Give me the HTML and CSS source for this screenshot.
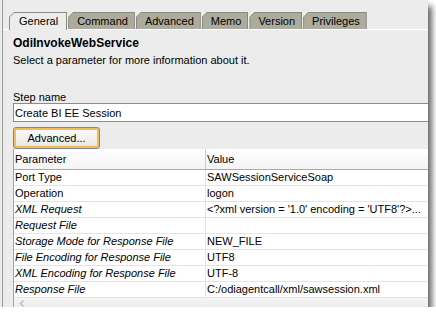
FILE: index.html
```html
<!DOCTYPE html>
<html lang="en">
<head>
    <meta charset="UTF-8">
    <title>OdiInvokeWebService</title>
    <link rel="stylesheet" href="styles.css">
</head>
<body>

    <div class="window">
        <div class="pane">
            <div class="tabs">
                <div class="tab active"><span>General</span></div>
                <div class="tab"><span>Command</span></div>
                <div class="tab"><span>Advanced</span></div>
                <div class="tab"><span>Memo</span></div>
                <div class="tab"><span>Version</span></div>
                <div class="tab"><span>Privileges</span></div>
            </div>

            <div class="content">
                <h1 class="title">OdiInvokeWebService</h1>
                <p class="hint">Select a parameter for more information about it.</p>

                <label class="field-label" for="stepName">Step name</label>
                <input type="text" id="stepName" class="step-name" value="Create BI EE Session">

                <button class="adv-btn">Advanced...</button>

                <div class="grid">
                    <div class="grid-row grid-head">
                        <div class="cell">Parameter</div>
                        <div class="cell">Value</div>
                    </div>
                    <div class="grid-row">
                        <div class="cell">Port Type</div>
                        <div class="cell">SAWSessionServiceSoap</div>
                    </div>
                    <div class="grid-row">
                        <div class="cell">Operation</div>
                        <div class="cell">logon</div>
                    </div>
                    <div class="grid-row optional">
                        <div class="cell">XML Request</div>
                        <div class="cell">&lt;?xml version = '1.0' encoding = 'UTF8'?&gt;...</div>
                    </div>
                    <div class="grid-row optional">
                        <div class="cell">Request File</div>
                        <div class="cell"></div>
                    </div>
                    <div class="grid-row optional">
                        <div class="cell">Storage Mode for Response File</div>
                        <div class="cell">NEW_FILE</div>
                    </div>
                    <div class="grid-row optional">
                        <div class="cell">File Encoding for Response File</div>
                        <div class="cell">UTF8</div>
                    </div>
                    <div class="grid-row optional">
                        <div class="cell">XML Encoding for Response File</div>
                        <div class="cell">UTF-8</div>
                    </div>
                    <div class="grid-row optional">
                        <div class="cell">Response File</div>
                        <div class="cell">C:/odiagentcall/xml/sawsession.xml</div>
                    </div>
                    <div class="hscroll">
                        <svg width="6" height="7" viewBox="0 0 6 7">
                            <path d="M4.5 0.5 L1.5 3.5 L4.5 6.5" fill="none" stroke="#b8b8b8" stroke-width="1.3"/>
                        </svg>
                    </div>
                </div>
            </div>
        </div>
    </div>

</body>
</html>
```

FILE: styles.css
```css
body {
    margin: 0;
    padding: 0;
    background-color: #fff;
    font-family: "Liberation Sans", Arial, sans-serif;
    font-size: 11px;
    color: #000;
}

.window {
    width: 428px;
    height: 307px;
    box-sizing: border-box;
    padding-left: 2px;
    background: #ececec;
    box-shadow: 4px 6px 6px rgba(0, 0, 0, 0.6);
    overflow: hidden;
}

.pane {
    height: 100%;
    border-left: 1px solid #9a9a9a;
}

/* tab strip */
.tabs {
    display: flex;
    align-items: flex-start;
    height: 30px;
    box-sizing: border-box;
    padding: 12px 0 0 6px;
    border-bottom: 1px solid #fff;
}

.tab {
    height: 17px;
    box-sizing: border-box;
    padding: 1px 1px 0 1px;
    margin-right: 1px;
    background: #8a8a84;
    clip-path: polygon(5px 0, 100% 0, 100% 100%, 0 100%, 0 5px);
}

.tab span {
    display: block;
    height: 100%;
    padding: 0 6px 0 8px;
    line-height: 16px;
    background: #adac9c;
    clip-path: polygon(4px 0, 100% 0, 100% 100%, 0 100%, 0 4px);
}

.tab.active {
    height: 18px;
    margin-bottom: -1px;
}

.tab.active span {
    padding: 0 8px 0 9px;
    background: #ececec;
}

/* general panel */
.content {
    padding-left: 10px;
    margin-right: -20px;
}

.title {
    margin: 6px 0 0;
    font-size: 12px;
    line-height: 14px;
    font-weight: bold;
}

.hint {
    margin: 4px 0 0;
    line-height: 13px;
}

.field-label {
    display: block;
    margin-top: 24px;
    line-height: 12px;
}

.step-name {
    display: block;
    width: 100%;
    height: 19px;
    box-sizing: border-box;
    margin: 0;
    padding: 0 1px;
    border: 1px solid #8c8c8c;
    background: #fff;
    font-family: "Liberation Sans", Arial, sans-serif;
    font-size: 11px;
    color: #000;
}

.adv-btn {
    display: block;
    width: 87px;
    height: 22px;
    margin-top: 5px;
    padding: 0;
    border: 1px solid #80868f;
    border-radius: 3px;
    background: linear-gradient(#fdfdfb, #ecebe6 80%, #d8d7d0);
    box-shadow: inset 0 0 0 2px #f1bb5e;
    font-family: "Liberation Sans", Arial, sans-serif;
    font-size: 11px;
    color: #000;
}

/* parameter table */
.grid {
    border-left: 1px solid #a4a4a4;
}

.grid-row {
    display: grid;
    grid-template-columns: 192px 1fr;
    height: 16px;
    box-sizing: border-box;
    background: #fff;
    border-bottom: 1px solid #e4e4e4;
    line-height: 15px;
}

.grid-row .cell {
    padding-left: 1px;
    white-space: nowrap;
    overflow: hidden;
}

.grid-row .cell:first-child {
    border-right: 1px solid #e4e4e4;
}

.grid-head {
    height: 21px;
    line-height: 20px;
    background: linear-gradient(#fff, #f4f4f4);
    border-bottom: 1px solid #a9a9a9;
}

.grid-head .cell:first-child {
    border-right-color: #c9c9c9;
}

.optional .cell:first-child {
    font-style: italic;
}

.hscroll {
    display: flex;
    align-items: center;
    height: 9px;
    padding: 1px 0 0 5px;
    background: linear-gradient(#f6f6f6, #ebebeb);
}
```
